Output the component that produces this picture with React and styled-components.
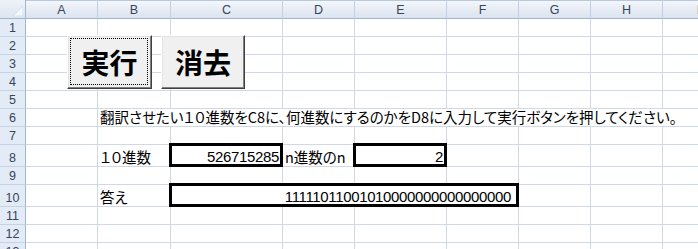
import React from 'react';
import styled, { createGlobalStyle } from 'styled-components';

const GlobalStyle = createGlobalStyle`
  html, body {
    margin: 0;
    padding: 0;
    overflow: hidden;
    background: #fff;
  }
`;

const COLS = ['A', 'B', 'C', 'D', 'E', 'F', 'G', 'H', 'I'];
const COL_WIDTHS = '26px 72px 73px 112px 72px 92px 72px 72px 72px 72px';
const ROW_COUNT = 13;
const TALL_ROWS = [8, 10];

// what is typed into the sheet
const cells = {
  B6: { text: '翻訳させたい１０進数をC8に、何進数にするのかをD8に入力して実行ボタンを押してください。', span: 8 },
  B8: { text: '１０進数' },
  C8: { text: '526715285', num: true, boxed: true, pad: 3 },
  D8: { text: 'n進数のn' },
  E8: { text: '2', num: true, boxed: true, pad: 3 },
  B10: { text: '答え' },
  C10: { text: '11111011001010000000000000000', num: true, boxed: true, span: 4, pad: 7 },
};

const Page = styled.div`
  position: relative;
  width: 698px;
  height: 249px;
  overflow: hidden;
`;

const Sheet = styled.div`
  display: grid;
  grid-template-columns: ${COL_WIDTHS};
  grid-template-rows: 19px ${({ $rows }) => $rows};
`;

const Corner = styled.div`
  box-sizing: border-box;
  background: linear-gradient(to bottom, #eef2f8, #dde5f0);
  border-right: 1px solid #9eb6ce;
  border-bottom: 1px solid #9eb6ce;
  display: flex;
  align-items: flex-end;
  justify-content: flex-end;
  padding: 0 2px 2px 0;

  svg {
    display: block;
  }
`;

const ColHead = styled.div`
  box-sizing: border-box;
  background: linear-gradient(to bottom, #f5f8fc 0%, #e6ecf5 55%, #dbe3ef 100%);
  border-right: 1px solid #c3d0e1;
  border-bottom: 1px solid #9eb6ce;
  box-shadow: inset 0 1px 0 #b9c9dd;
  font-family: 'Liberation Sans', Arial, sans-serif;
  font-size: 12.5px;
  color: #37445a;
  display: flex;
  align-items: center;
  justify-content: center;
  padding-top: 2px;
`;

const RowHead = styled.div`
  box-sizing: border-box;
  background: #e3ebf6;
  border-right: 1px solid #9eb6ce;
  border-bottom: 1px solid #c5d3e5;
  font-family: 'Liberation Sans', Arial, sans-serif;
  font-size: 12.5px;
  color: #37445a;
  display: flex;
  align-items: flex-end;
  justify-content: center;
  padding-bottom: 2px;
  line-height: 1;
`;

const Cell = styled.div`
  position: relative;
  box-sizing: border-box;
  grid-column: span ${({ $span }) => $span || 1};
  border-right: 1px solid #d0d7e5;
  border-bottom: 1px solid #d0d7e5;
  display: flex;
  align-items: flex-end;
  justify-content: ${({ $num }) => ($num ? 'flex-end' : 'flex-start')};
  padding: 0 ${({ $pad }) => $pad || 0}px 1px 2px;
  white-space: nowrap;
  color: #000;
  font-family: ${({ $num }) =>
    $num ? "'Liberation Sans', Arial, sans-serif" : "'Noto Sans CJK JP', 'Liberation Sans', sans-serif"};
  font-size: ${({ $num }) => ($num ? '15px' : '14.5px')};
  letter-spacing: ${({ $num }) => ($num ? '-0.35px' : '0')};
  font-feature-settings: 'palt';
  line-height: 1.1;

  ${({ $boxed }) =>
    $boxed &&
    `
    &::after {
      content: '';
      position: absolute;
      top: -2px;
      left: -2px;
      right: -1px;
      bottom: -1px;
      border: 3px solid #000;
      z-index: 1;
    }
  `}
`;

const SheetButton = styled.div`
  position: absolute;
  top: 35px;
  left: ${({ $left }) => $left}px;
  width: ${({ $width }) => $width}px;
  height: 54px;
  box-sizing: border-box;
  background: #f0f0f0;
  border: 1px solid;
  border-color: #ffffff #404040 #404040 #ffffff;
  box-shadow: inset -1px -1px 0 #808080, inset 1px 1px 0 #e3e3e3;
  display: flex;
  align-items: center;
  justify-content: center;
  font-family: 'Noto Sans CJK JP', sans-serif;
  font-weight: 700;
  font-size: 28px;
  line-height: 1;
  color: #000;
  z-index: 3;

  ${({ $focused }) =>
    $focused &&
    `
    &::before {
      content: '';
      position: absolute;
      top: 2px;
      left: 2px;
      right: 3px;
      bottom: 3px;
      border: 1px dotted #000;
    }
  `}
`;

const CornerMark = () => (
  <svg width="10" height="10" viewBox="0 0 10 10">
    <polygon points="10,0 10,10 0,10" fill="#f4f7fb" stroke="#c9d5e4" strokeWidth="0.6" />
  </svg>
);

const rowHeights = Array.from({ length: ROW_COUNT }, (_, i) =>
  TALL_ROWS.includes(i + 1) ? '22px' : '18px'
).join(' ');

const renderRow = (r) => {
  const out = [<RowHead key={`h${r}`}>{r}</RowHead>];
  let skip = 0;
  COLS.forEach((c) => {
    if (skip > 0) {
      skip -= 1;
      return;
    }
    const cell = cells[`${c}${r}`];
    if (cell && cell.span) skip = cell.span - 1;
    out.push(
      <Cell
        key={`${c}${r}`}
        $span={cell?.span}
        $num={cell?.num}
        $boxed={cell?.boxed}
        $pad={cell?.pad}
      >
        {cell?.text}
      </Cell>
    );
  });
  return out;
};

const App = () => (
  <Page>
    <GlobalStyle />
    <Sheet $rows={rowHeights}>
      <Corner>
        <CornerMark />
      </Corner>
      {COLS.map((c) => (
        <ColHead key={c}>{c}</ColHead>
      ))}
      {Array.from({ length: ROW_COUNT }, (_, i) => renderRow(i + 1))}
    </Sheet>
    <SheetButton $left={67} $width={85} $focused>
      実行
    </SheetButton>
    <SheetButton $left={161} $width={84}>
      消去
    </SheetButton>
  </Page>
);

export default App;
